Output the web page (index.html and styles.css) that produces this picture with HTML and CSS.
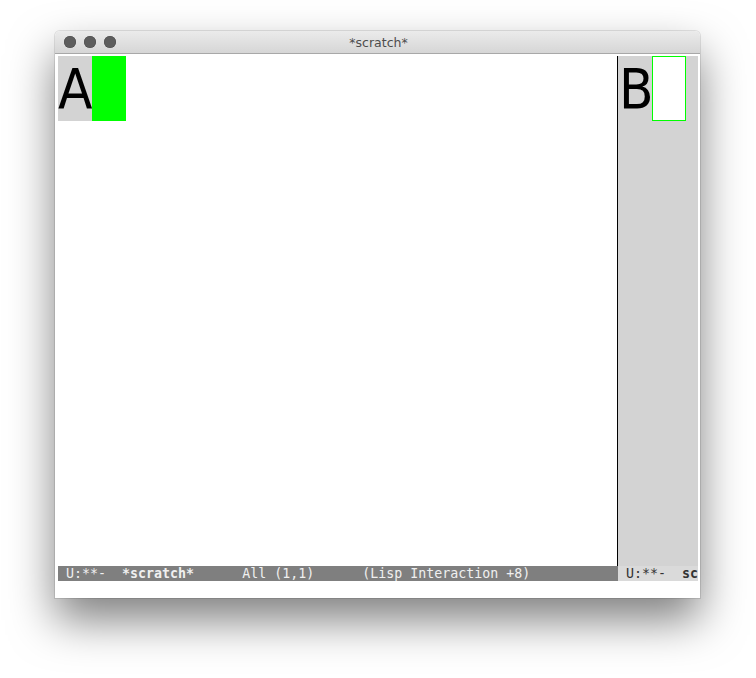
FILE: index.html
```html
<!DOCTYPE html>
<html>
<head>
<meta charset="utf-8">
<link rel="stylesheet" href="styles.css">
</head>
<body>
<div class="window">
  <div class="titlebar">
    <div class="lights">
      <span class="light"></span><span class="light"></span><span class="light"></span>
    </div>
    <div class="title">*scratch*</div>
  </div>
  <div class="frame">
    <div class="panes">
      <div class="pane pane-left">
        <div class="buffer buffer-left">
          <div class="row">
            <div class="cell cell-a">A</div>
            <div class="cell cell-green"></div>
          </div>
        </div>
        <div class="modeline modeline-active"> U:**-  <b>*scratch*</b>      All (1,1)      (Lisp Interaction +8)</div>
      </div>
      <div class="pane pane-right">
        <div class="buffer buffer-right">
          <div class="row">
            <div class="cell cell-b">B</div>
            <div class="cell cell-outline"></div>
          </div>
        </div>
        <div class="modeline modeline-inactive"> U:**-  <b>scratch</b></div>
      </div>
    </div>
    <div class="echo"></div>
  </div>
</div>
</body>
</html>
```
FILE: styles.css
```css
html, body {
  margin: 0;
  padding: 0;
  background: #ffffff;
}
body {
  box-sizing: border-box;
  min-height: 678px;
  padding: 31px 0 0 55px;
}
.window {
  width: 645px;
  height: 567px;
  display: flex;
  flex-direction: column;
  background: #ffffff;
  border-radius: 5px 5px 0 0;
  box-shadow: 0 0 0 1px rgba(0,0,0,0.1), 0 22px 45px rgba(0,0,0,0.5);
  overflow: hidden;
}
.titlebar {
  height: 22px;
  flex: none;
  position: relative;
  display: flex;
  align-items: center;
  justify-content: center;
  background: linear-gradient(#ebebeb, #d6d6d6);
  border-bottom: 1px solid #a8a8a8;
}
.lights {
  position: absolute;
  left: 9px;
  top: 5px;
  display: flex;
  gap: 8px;
}
.light {
  width: 12px;
  height: 12px;
  border-radius: 50%;
  background: #5d5d5d;
  box-shadow: inset 0 0 0 0.5px #4a4a4a;
}
.title {
  font-family: "DejaVu Sans", "Liberation Sans", sans-serif;
  font-size: 12.5px;
  color: #4d4d4d;
  margin-left: 2px;
}
.frame {
  flex: 1;
  display: flex;
  flex-direction: column;
  padding: 2px 2px 0 3px;
}
.panes {
  display: flex;
  height: 525px;
}
.pane {
  display: flex;
  flex-direction: column;
}
.pane-left {
  width: 560px;
}
.pane-right {
  width: 80px;
}
.buffer {
  flex: 1;
  min-height: 0;
}
.buffer-left {
  background: #ffffff;
  border-right: 1px solid #000000;
}
.buffer-right {
  background: #d3d3d3;
}
.row {
  display: flex;
}
.cell {
  width: 34px;
  height: 65px;
  box-sizing: border-box;
  font-family: "DejaVu Sans", "Liberation Sans", sans-serif;
  font-stretch: condensed;
  font-size: 56px;
  line-height: 65px;
  color: #000;
  overflow: hidden;
}
.cell-a {
  background: #d3d3d3;
}
.cell-green {
  background: #00ff00;
}
.cell-b {
  padding-left: 1px;
}
.cell-outline {
  background: #ffffff;
  border: 1px solid #00ff00;
}
.modeline {
  height: 15px;
  flex: none;
  font-family: "DejaVu Sans Mono", monospace;
  font-size: 13.3px;
  line-height: 15px;
  white-space: pre;
  overflow: hidden;
}
.modeline-active {
  background: #7f7f7f;
  color: #f0f0f0;
}
.modeline-inactive {
  background: #dadada;
  color: #333333;
}
.echo {
  flex: 1;
  background: #ffffff;
}
```
